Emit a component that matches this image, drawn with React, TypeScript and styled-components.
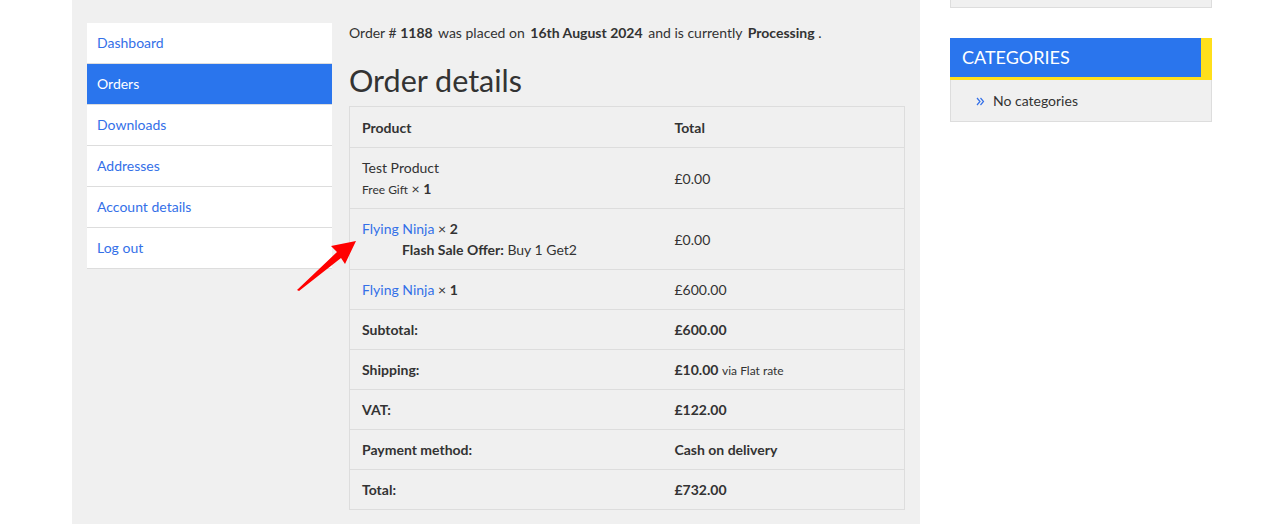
import React from "react";
import styled, {createGlobalStyle} from "styled-components";

const GlobalStyle = createGlobalStyle`
  html, body {
    margin: 0;
    padding: 0;
    background: #ffffff;
    font-family: Lato, "Open Sans", Arial, sans-serif;
    color: #333333;
  }
`

const Page = styled.div`
  position: relative;
  display: flex;
  align-items: flex-start;
  gap: 30px;
  padding-left: 72px;
  width: 1273px;
  height: 524px;
  box-sizing: border-box;
  overflow: hidden;
`

const Main = styled.main`
  display: flex;
  align-items: flex-start;
  gap: 17px;
  width: 848px;
  height: 524px;
  box-sizing: border-box;
  padding: 23px 15px 0;
  background: #f0f0f0;
`

const Nav = styled.nav`
  width: 245px;
  flex-shrink: 0;
  background: #ffffff;
`

const NavItem = styled.a<{$active?: boolean}>`
  display: block;
  height: 40px;
  line-height: 40px;
  padding-left: 10px;
  font-size: 14px;
  text-decoration: none;
  border-bottom: 1px solid #dddddd;
  color: ${p => p.$active ? '#ffffff' : '#3470e8'};
  background: ${p => p.$active ? '#2a75ed' : 'transparent'};
`

const Content = styled.section`
  width: 556px;
  flex-shrink: 0;
`

const Intro = styled.p`
  margin: 0;
  font-size: 14px;
  line-height: 20px;
`

const Strong = styled.b<{$left?: number; $right?: number}>`
  font-weight: 700;
  margin-left: ${p => p.$left ?? 2}px;
  margin-right: ${p => p.$right ?? 2}px;
`

const Heading = styled.h2`
  margin: 17px 0 6px;
  font-size: 30.5px;
  line-height: 40px;
  font-weight: 400;
  color: #333333;
`

const Table = styled.table`
  width: 100%;
  border-collapse: collapse;
  border: 1px solid #dddddd;
  font-size: 14px;
  table-layout: fixed;
`

const Cell = styled.td<{$bold?: boolean; $head?: boolean}>`
  padding: ${p => p.$head ? '10px 12px 9px' : '9px 12px'};
  line-height: 21px;
  border-top: 1px solid #dddddd;
  vertical-align: middle;
  font-weight: ${p => p.$bold ? 700 : 400};
`

const ProductLink = styled.a`
  color: #3470e8;
  text-decoration: none;
`

const Small = styled.span`
  font-size: 12px;
  line-height: 1;
`

const Meta = styled.div`
  height: 21px;
  line-height: 21px;
`

const Offer = styled.div`
  height: 21px;
  padding-left: 40px;
  line-height: 21px;
`

const Sidebar = styled.aside`
  width: 262px;
  flex-shrink: 0;
  display: flex;
  flex-direction: column;
  gap: 30px;
`

const TopWidget = styled.div`
  height: 8px;
  background: #f0f0f0;
  border: 1px solid #dddddd;
  border-top: none;
  box-sizing: border-box;
`

const WidgetTitle = styled.h3`
  margin: 0;
  height: 39px;
  line-height: 39px;
  padding-left: 12px;
  font-size: 18px;
  font-weight: 400;
  color: #ffffff;
  background: #2a75ed;
  border-bottom: 3px solid #ffdf1b;
  border-right: 11px solid #ffdf1b;
`

const WidgetList = styled.ul`
  list-style: none;
  margin: 0;
  padding: 11px 0 10px 25px;
  font-size: 14px;
  line-height: 20px;
  background: #f0f0f0;
  border: 1px solid #dddddd;
  border-top: none;
`

const WidgetItem = styled.li`
  display: flex;
  align-items: center;
  gap: 8px;
`

const Arrow = styled.svg`
  position: absolute;
  left: 0;
  top: 0;
  pointer-events: none;
`

const navItems = ['Dashboard', 'Orders', 'Downloads', 'Addresses', 'Account details', 'Log out']

export default function App(): React.JSX.Element {
    return (
        <>
            <GlobalStyle/>
            <Page>
                <Main>
                    <Nav>
                        {navItems.map(item => (
                            <NavItem key={item} href="#" $active={item === 'Orders'}>{item}</NavItem>
                        ))}
                    </Nav>
                    <Content>
                        <Intro>
                            Order # <Strong $left={0}>1188</Strong> was placed on <Strong>16th August 2024</Strong> and is currently <Strong $right={0}>Processing</Strong> .
                        </Intro>
                        <Heading>Order details</Heading>
                        <Table>
                            <colgroup>
                                <col style={{width: '313px'}}/>
                                <col/>
                            </colgroup>
                            <tbody>
                            <tr>
                                <Cell $bold $head>Product</Cell>
                                <Cell $bold $head>Total</Cell>
                            </tr>
                            <tr>
                                <Cell>
                                    <Meta>Test Product</Meta>
                                    <Meta><Small>Free Gift</Small> × <b>1</b></Meta>
                                </Cell>
                                <Cell>£0.00</Cell>
                            </tr>
                            <tr>
                                <Cell>
                                    <Meta><ProductLink href="#">Flying Ninja</ProductLink> × <b>2</b></Meta>
                                    <Offer><b>Flash Sale Offer:</b> Buy 1 Get2</Offer>
                                </Cell>
                                <Cell>£0.00</Cell>
                            </tr>
                            <tr>
                                <Cell><ProductLink href="#">Flying Ninja</ProductLink> × <b>1</b></Cell>
                                <Cell>£600.00</Cell>
                            </tr>
                            <tr>
                                <Cell $bold>Subtotal:</Cell>
                                <Cell $bold>£600.00</Cell>
                            </tr>
                            <tr>
                                <Cell $bold>Shipping:</Cell>
                                <Cell><b>£10.00</b> <Small>via Flat rate</Small></Cell>
                            </tr>
                            <tr>
                                <Cell $bold>VAT:</Cell>
                                <Cell $bold>£122.00</Cell>
                            </tr>
                            <tr>
                                <Cell $bold>Payment method:</Cell>
                                <Cell $bold>Cash on delivery</Cell>
                            </tr>
                            <tr>
                                <Cell $bold>Total:</Cell>
                                <Cell $bold>£732.00</Cell>
                            </tr>
                            </tbody>
                        </Table>
                    </Content>
                </Main>
                <Sidebar>
                    <TopWidget/>
                    <div>
                        <WidgetTitle>CATEGORIES</WidgetTitle>
                        <WidgetList>
                            <WidgetItem>
                                <svg width="9" height="9" viewBox="0 0 9 9" fill="none" stroke="#3470e8" strokeWidth="1.2">
                                    <path d="M1 1l3 3.5L1 8M4.5 1l3 3.5L4.5 8"/>
                                </svg>
                                No categories
                            </WidgetItem>
                        </WidgetList>
                    </div>
                </Sidebar>
                <Arrow width="1273" height="524" viewBox="0 0 1273 524">
                    <polygon points="297,290 337,252 331,246 356,241 345,264 341,258 299,291" fill="#ff0000"/>
                </Arrow>
            </Page>
        </>
    )
}
